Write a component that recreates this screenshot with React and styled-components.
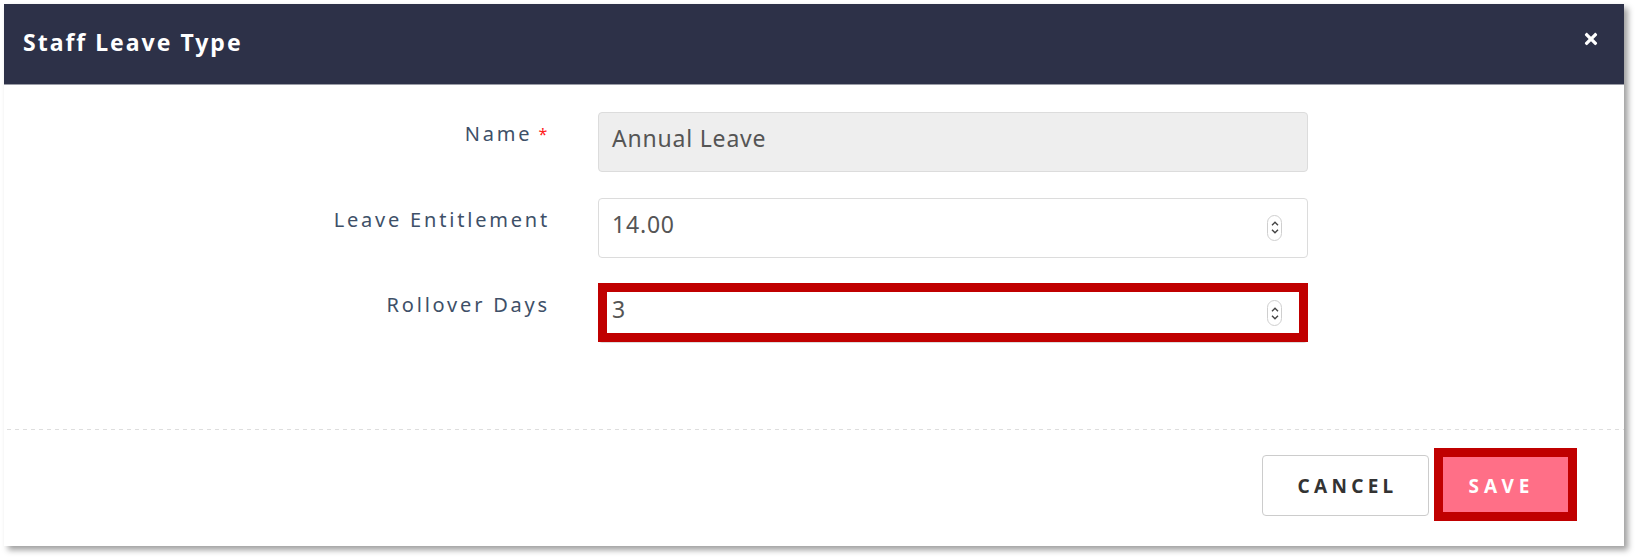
import React from 'react';
import styled, { createGlobalStyle } from 'styled-components';
import { FaTimes } from 'react-icons/fa';

const GlobalStyle = createGlobalStyle`
  html, body {
    margin: 0;
    padding: 0;
    background: #ffffff;
    font-family: "Noto Sans", "Open Sans", sans-serif;
  }
`;

const Page = styled.div`
  padding: 4px 0 0 4px;
  width: 1636px;
  height: 558px;
  box-sizing: border-box;
`;

const Modal = styled.div`
  width: 1620px;
  height: 542px;
  background: #ffffff;
  box-shadow: 4px 4px 6px rgba(0, 0, 0, 0.38);
  display: flex;
  flex-direction: column;
`;

const Header = styled.div`
  height: 81px;
  background: #2d3148;
  display: flex;
  align-items: center;
  justify-content: space-between;
  padding: 0 24px 0 19px;
  box-sizing: border-box;
  border-bottom: 1px solid #9a9ca6;
`;

const Title = styled.h1`
  margin: 0 0 4px 0;
  color: #ffffff;
  font-size: 23px;
  font-weight: 700;
  letter-spacing: 2px;
`;

const Close = styled.span`
  color: #ffffff;
  display: flex;
  align-self: flex-start;
  margin-top: 26px;
  font-size: 18px;
`;

const Body = styled.div`
  padding: 27px 0 86px 0;
  display: flex;
  flex-direction: column;
  gap: 25.5px;
`;

const Row = styled.div`
  display: grid;
  grid-template-columns: 546px 710px;
  column-gap: 48px;
`;

const Label = styled.label`
  text-align: right;
  color: #3e5068;
  font-size: 20px;
  letter-spacing: 2.8px;
  line-height: 22px;
  padding-top: 11px;
`;

const Required = styled.span`
  color: #ff1a1a;
  margin-left: 6px;
  font-size: 16px;
  vertical-align: top;
`;

const Field = styled.div`
  position: relative;
  height: 60px;
  box-sizing: border-box;
  border: 1px solid #dcdcdc;
  border-radius: 4px;
  background: ${({ disabled }) => (disabled ? '#eeeeee' : '#ffffff')};
  display: flex;
  align-items: center;
  justify-content: space-between;
  padding: 0 25px 0 13px;
  color: #555555;
  font-size: 23px;
  letter-spacing: 0.8px;
`;

const Value = styled.span`
  padding-bottom: 8px;
`;

const Spinner = styled.div`
  width: 15px;
  height: 26px;
  box-sizing: border-box;
  border: 1px solid #cfcfcf;
  border-radius: 8px;
  display: flex;
  flex-direction: column;
  align-items: center;
  justify-content: center;
  gap: 3px;
`;

const Highlight = styled.div`
  position: absolute;
  top: ${({ t }) => t}px;
  left: ${({ l }) => l}px;
  right: ${({ r }) => r}px;
  bottom: ${({ b }) => b}px;
  border: 9px solid #c00000;
  pointer-events: none;
`;

const Divider = styled.div`
  height: 1px;
  margin-left: 3px;
  background-image: repeating-linear-gradient(to right, #dedede 0 4px, transparent 4px 8px);
`;

const Footer = styled.div`
  display: flex;
  justify-content: flex-end;
  gap: 10px;
  padding: 25px 52px 30px 0;
`;

const Button = styled.button`
  position: relative;
  height: 61px;
  width: ${({ w }) => w}px;
  box-sizing: border-box;
  border-radius: 4px;
  border: 1px solid ${({ primary }) => (primary ? '#ff6f87' : '#cccccc')};
  background: ${({ primary }) => (primary ? '#ff6f87' : '#ffffff')};
  color: ${({ primary }) => (primary ? '#ffffff' : '#333333')};
  font-family: "Noto Sans", sans-serif;
  font-size: 19px;
  font-weight: 700;
  letter-spacing: ${({ primary }) => (primary ? '5px' : '4.3px')};
  padding: ${({ primary }) => (primary ? '0 8px 0 0' : '0 0 0 4px')};
`;

const Chevron = ({ up }) => (
  <svg width="8" height="5" viewBox="0 0 8 5">
    <path
      d={up ? 'M1 4.2 L4 1.2 L7 4.2' : 'M1 0.8 L4 3.8 L7 0.8'}
      fill="none"
      stroke="#444"
      strokeWidth="1.4"
    />
  </svg>
);

const NumberSpin = () => (
  <Spinner>
    <Chevron up />
    <Chevron />
  </Spinner>
);

export default function App() {
  return (
    <Page>
      <GlobalStyle />
      <Modal>
        <Header>
          <Title>Staff Leave Type</Title>
          <Close>
            <FaTimes />
          </Close>
        </Header>
        <Body>
          <Row>
            <Label>
              Name<Required>*</Required>
            </Label>
            <Field disabled>
              <Value>Annual Leave</Value>
            </Field>
          </Row>
          <Row>
            <Label>Leave Entitlement</Label>
            <Field>
              <Value>14.00</Value>
              <NumberSpin />
            </Field>
          </Row>
          <Row>
            <Label>Rollover Days</Label>
            <Field>
              <Value>3</Value>
              <NumberSpin />
              <Highlight t={-1} l={-1} r={-1} b={0} />
            </Field>
          </Row>
        </Body>
        <Divider />
        <Footer>
          <Button w={167}>CANCEL</Button>
          <Button primary w={133}>
            SAVE
            <Highlight t={-8} l={-6} r={-6} b={-6} />
          </Button>
        </Footer>
      </Modal>
    </Page>
  );
}
